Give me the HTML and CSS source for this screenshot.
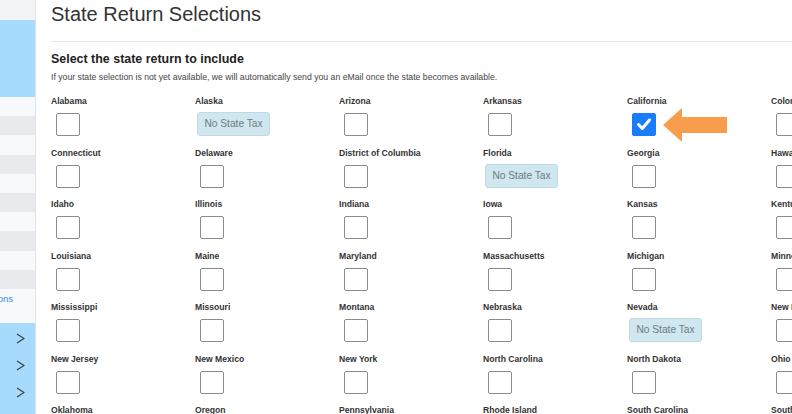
FILE: index.html
```html
<!DOCTYPE html>
<html lang="en">
<head>
<meta charset="utf-8">
<title>State Return Selections</title>
<link rel="stylesheet" href="styles.css">
</head>
<body>
<div class="app">
  <aside class="sidebar">
    <div class="sb-top"></div>
    <div class="sb-blue"></div>
    <div class="sb-row"></div>
    <div class="sb-row alt"></div>
    <div class="sb-row"></div>
    <div class="sb-row alt"></div>
    <div class="sb-row"></div>
    <div class="sb-row alt"></div>
    <div class="sb-row"></div>
    <div class="sb-row alt"></div>
    <div class="sb-row"></div>
    <div class="sb-row alt"></div>
    <div class="sb-link"><span>State Return Selections</span></div>
    <div class="sb-nav">
      <div class="sb-chev"><svg width="9" height="11" viewBox="0 0 9 11"><polyline points="1,1 8,5.5 1,10" fill="none" stroke="#3a3a3a" stroke-width="1.1"/></svg></div>
      <div class="sb-chev"><svg width="9" height="11" viewBox="0 0 9 11"><polyline points="1,1 8,5.5 1,10" fill="none" stroke="#3a3a3a" stroke-width="1.1"/></svg></div>
      <div class="sb-chev"><svg width="9" height="11" viewBox="0 0 9 11"><polyline points="1,1 8,5.5 1,10" fill="none" stroke="#3a3a3a" stroke-width="1.1"/></svg></div>
    </div>
  </aside>
  <main class="main">
    <h1 class="title">State Return Selections</h1>
    <hr class="rule">
    <h2 class="subtitle">Select the state return to include</h2>
    <p class="note">If your state selection is not yet available, we will automatically send you an eMail once the state becomes available.</p>
    <div class="grid">
      <div class="cell"><div class="label">Alabama</div><span class="box"></span></div>
      <div class="cell"><div class="label">Alaska</div><span class="badge">No State Tax</span></div>
      <div class="cell"><div class="label">Arizona</div><span class="box"></span></div>
      <div class="cell"><div class="label">Arkansas</div><span class="box"></span></div>
      <div class="cell"><div class="label">California</div><span class="box checked"><svg width="24" height="23" viewBox="0 0 24 23"><polyline points="6.5,11.5 10.3,15.5 17.5,7" fill="none" stroke="#fff" stroke-width="3" stroke-linecap="round" stroke-linejoin="round"/></svg></span>
        <svg class="arrow" width="64" height="34" viewBox="0 0 64 34"><polygon points="0,17 19,0 19,9 64,9 64,25 19,25 19,34" fill="#f89d4c"/></svg>
      </div>
      <div class="cell"><div class="label">Colorado</div><span class="box"></span></div>

      <div class="cell"><div class="label">Connecticut</div><span class="box"></span></div>
      <div class="cell"><div class="label">Delaware</div><span class="box"></span></div>
      <div class="cell"><div class="label">District of Columbia</div><span class="box"></span></div>
      <div class="cell"><div class="label">Florida</div><span class="badge">No State Tax</span></div>
      <div class="cell"><div class="label">Georgia</div><span class="box"></span></div>
      <div class="cell"><div class="label">Hawaii</div><span class="box"></span></div>

      <div class="cell"><div class="label">Idaho</div><span class="box"></span></div>
      <div class="cell"><div class="label">Illinois</div><span class="box"></span></div>
      <div class="cell"><div class="label">Indiana</div><span class="box"></span></div>
      <div class="cell"><div class="label">Iowa</div><span class="box"></span></div>
      <div class="cell"><div class="label">Kansas</div><span class="box"></span></div>
      <div class="cell"><div class="label">Kentucky</div><span class="box"></span></div>

      <div class="cell"><div class="label">Louisiana</div><span class="box"></span></div>
      <div class="cell"><div class="label">Maine</div><span class="box"></span></div>
      <div class="cell"><div class="label">Maryland</div><span class="box"></span></div>
      <div class="cell"><div class="label">Massachusetts</div><span class="box"></span></div>
      <div class="cell"><div class="label">Michigan</div><span class="box"></span></div>
      <div class="cell"><div class="label">Minnesota</div><span class="box"></span></div>

      <div class="cell"><div class="label">Mississippi</div><span class="box"></span></div>
      <div class="cell"><div class="label">Missouri</div><span class="box"></span></div>
      <div class="cell"><div class="label">Montana</div><span class="box"></span></div>
      <div class="cell"><div class="label">Nebraska</div><span class="box"></span></div>
      <div class="cell"><div class="label">Nevada</div><span class="badge">No State Tax</span></div>
      <div class="cell"><div class="label">New Hampshire</div><span class="box"></span></div>

      <div class="cell"><div class="label">New Jersey</div><span class="box"></span></div>
      <div class="cell"><div class="label">New Mexico</div><span class="box"></span></div>
      <div class="cell"><div class="label">New York</div><span class="box"></span></div>
      <div class="cell"><div class="label">North Carolina</div><span class="box"></span></div>
      <div class="cell"><div class="label">North Dakota</div><span class="box"></span></div>
      <div class="cell"><div class="label">Ohio</div><span class="box"></span></div>

      <div class="cell"><div class="label">Oklahoma</div><span class="box"></span></div>
      <div class="cell"><div class="label">Oregon</div><span class="box"></span></div>
      <div class="cell"><div class="label">Pennsylvania</div><span class="box"></span></div>
      <div class="cell"><div class="label">Rhode Island</div><span class="box"></span></div>
      <div class="cell"><div class="label">South Carolina</div><span class="box"></span></div>
      <div class="cell"><div class="label">South Dakota</div><span class="box"></span></div>
    </div>
  </main>
</div>
</body>
</html>
```

FILE: styles.css
```css
html, body {
  margin: 0;
  padding: 0;
  overflow: hidden;
  background: #fff;
}
body {
  font-family: "Liberation Sans", Arial, sans-serif;
  color: #333;
}
.app {
  display: flex;
  width: 792px;
  height: 414px;
  overflow: hidden;
}
.sidebar {
  flex: 0 0 35px;
  width: 35px;
  border-right: 1px solid #e1e3e6;
  display: flex;
  flex-direction: column;
  overflow: hidden;
}
.sb-top { height: 20px; background: #f3f4f6; }
.sb-blue { height: 77px; background: #a7dbfd; }
.sb-row { height: 19.2px; background: #f8f9fa; }
.sb-row.alt { background: #e8eaed; }
.sb-link {
  height: 34px;
  background: #f8f9fa;
  display: flex;
  justify-content: flex-end;
  padding-right: 22px;
  overflow: hidden;
  white-space: nowrap;
  font-size: 9.5px;
  line-height: 20px;
  color: #3a8ee6;
}
.sb-link span { flex: 0 0 auto; }
.sb-nav {
  flex: 1;
  background: #a7dbfd;
  padding-top: 2px;
}
.sb-chev {
  height: 27px;
  display: flex;
  align-items: center;
  padding-left: 16px;
}
.sb-chev svg { display: block; }
.main {
  flex: 1;
  min-width: 0;
  overflow: hidden;
  padding: 3px 0 0 15px;
}
.title {
  margin: 0;
  font-size: 20px;
  line-height: 23px;
  font-weight: normal;
  color: #333;
  white-space: nowrap;
}
.rule {
  margin: 15px 0 0 0;
  border: 0;
  border-top: 1px solid #e5e5e5;
  height: 0;
}
.subtitle {
  margin: 10px 0 0 0;
  font-size: 12.45px;
  line-height: 15px;
  font-weight: bold;
  color: #222;
  white-space: nowrap;
}
.note {
  margin: 4px 0 0 0;
  font-size: 8.7px;
  line-height: 12px;
  color: #444;
  white-space: nowrap;
}
.grid {
  margin-top: 13px;
  display: grid;
  grid-template-columns: repeat(6, 144px);
  grid-auto-rows: 51.5px;
}
.cell {
  position: relative;
  display: flex;
  flex-direction: column;
  align-items: flex-start;
}
.label {
  font-size: 8.6px;
  line-height: 11px;
  font-weight: bold;
  color: #333;
  white-space: nowrap;
}
.box {
  margin: 6px 0 0 5px;
  width: 24px;
  height: 23px;
  box-sizing: border-box;
  border: 1px solid #8c8c8c;
  border-radius: 2px;
  background: #fff;
}
.box.checked {
  background: #1a7cf9;
  border-color: #1a7cf9;
  position: relative;
}
.box.checked svg {
  position: absolute;
  left: -1px;
  top: -1px;
}
.badge {
  margin: 5px 0 0 2px;
  width: 73px;
  height: 24px;
  box-sizing: border-box;
  border: 1px solid #bddbe6;
  border-radius: 3px;
  background: #d0e7f0;
  color: #6b7b83;
  font-size: 10.2px;
  line-height: 22px;
  text-align: center;
  white-space: nowrap;
}
.arrow {
  position: absolute;
  left: 36px;
  top: 12px;
}
```
